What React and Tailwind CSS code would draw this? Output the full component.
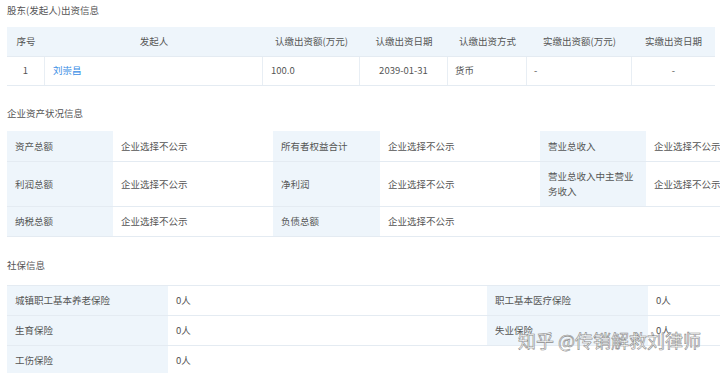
import React from "react";

const font = { fontFamily: '"Noto Sans CJK SC", "Liberation Sans", sans-serif' };

function Title({ children, className = "" }) {
  return <div className={"text-[9.5px] text-[#555] leading-none " + className}>{children}</div>;
}

export default function App() {
  const lbl = "bg-[#eef5fb] border-b border-[#e4ebf2] px-[8px] flex items-center";
  const val = "bg-white border-b border-[#e4ebf2] px-[8px] flex items-center whitespace-nowrap overflow-hidden";
  return (
    <div className="w-[720px] h-[373px] bg-white overflow-hidden relative text-[#555]" style={font}>
      <Title className="pl-[7px] pt-[6px]">股东(发起人)出资信息</Title>
      {/* Table 1 */}
      <div className="ml-[7px] mt-[11px] w-[708px] text-[9.5px]">
        <div className="grid grid-cols-[38px_218px_97px_88px_79px_105px_83px] h-[30px] bg-[#eef5fb] border-b border-[#e4ebf2]">
          <div className="flex items-center justify-center">序号</div>
          <div className="flex items-center justify-center">发起人</div>
          <div className="flex items-center justify-center">认缴出资额(万元)</div>
          <div className="flex items-center justify-center">认缴出资日期</div>
          <div className="flex items-center justify-center">认缴出资方式</div>
          <div className="flex items-center justify-center">实缴出资额(万元)</div>
          <div className="flex items-center justify-center">实缴出资日期</div>
        </div>
        <div className="grid grid-cols-[38px_218px_97px_88px_79px_105px_83px] h-[29px] border-b border-[#e4ebf2]">
          <div className="flex items-center justify-center border-r border-[#e8eef4]">1</div>
          <div className="flex items-center pl-[8px] text-[#3b8ee5] border-r border-[#e8eef4]">刘崇昌</div>
          <div className="flex items-center pl-[8px] border-r border-[#e8eef4]">100.0</div>
          <div className="flex items-center justify-center border-r border-[#e8eef4]">2039-01-31</div>
          <div className="flex items-center pl-[7px] border-r border-[#e8eef4]">货币</div>
          <div className="flex items-center pl-[7px] border-r border-[#e8eef4]">-</div>
          <div className="flex items-center justify-center">-</div>
        </div>
      </div>

      <Title className="pl-[7px] mt-[23px]">企业资产状况信息</Title>
      {/* Table 2 */}
      <div className="ml-[7px] mt-[13px] text-[9.5px] grid grid-cols-[106px_160px_107px_160px_106px_81px] grid-rows-[31px_45px_30px]">
        <div className={lbl}>资产总额</div>
        <div className={val}>企业选择不公示</div>
        <div className={lbl}>所有者权益合计</div>
        <div className={val}>企业选择不公示</div>
        <div className={lbl}>营业总收入</div>
        <div className={val}>企业选择不公示</div>

        <div className={lbl}>利润总额</div>
        <div className={val}>企业选择不公示</div>
        <div className={lbl}>净利润</div>
        <div className={val}>企业选择不公示</div>
        <div className={lbl + " leading-[15px]"}>营业总收入中主营业务收入</div>
        <div className={val}>企业选择不公示</div>

        <div className={lbl}>纳税总额</div>
        <div className={val}>企业选择不公示</div>
        <div className={lbl}>负债总额</div>
        <div className={val}>企业选择不公示</div>
        <div className="bg-white border-b border-[#e4ebf2]"></div>
        <div className="bg-white border-b border-[#e4ebf2]"></div>
      </div>

      <Title className="pl-[7px] mt-[24px]">社保信息</Title>
      {/* Table 3 */}
      <div className="ml-[7px] mt-[14px] text-[9.5px] grid grid-cols-[161px_319px_161px_72px] grid-rows-[30px_30px_30px] border-t border-[#e4ebf2]">
        <div className={lbl}>城镇职工基本养老保险</div>
        <div className={val}>0人</div>
        <div className={lbl}>职工基本医疗保险</div>
        <div className={val}>0人</div>

        <div className={lbl}>生育保险</div>
        <div className={val}>0人</div>
        <div className={lbl}>失业保险</div>
        <div className={val}>0人</div>

        <div className={lbl}>工伤保险</div>
        <div className={val}>0人</div>
        <div className="bg-white"></div>
        <div className="bg-white"></div>
      </div>

      {/* watermark */}
      <div
        className="absolute left-[518px] top-[331px] text-[18px] leading-none text-white whitespace-nowrap"
        style={{ WebkitTextStroke: "0.6px #8a8a8a", fontFamily: '"Noto Sans CJK SC", sans-serif' }}
      >
        知乎 @传销解救刘律师
      </div>
    </div>
  );
}
